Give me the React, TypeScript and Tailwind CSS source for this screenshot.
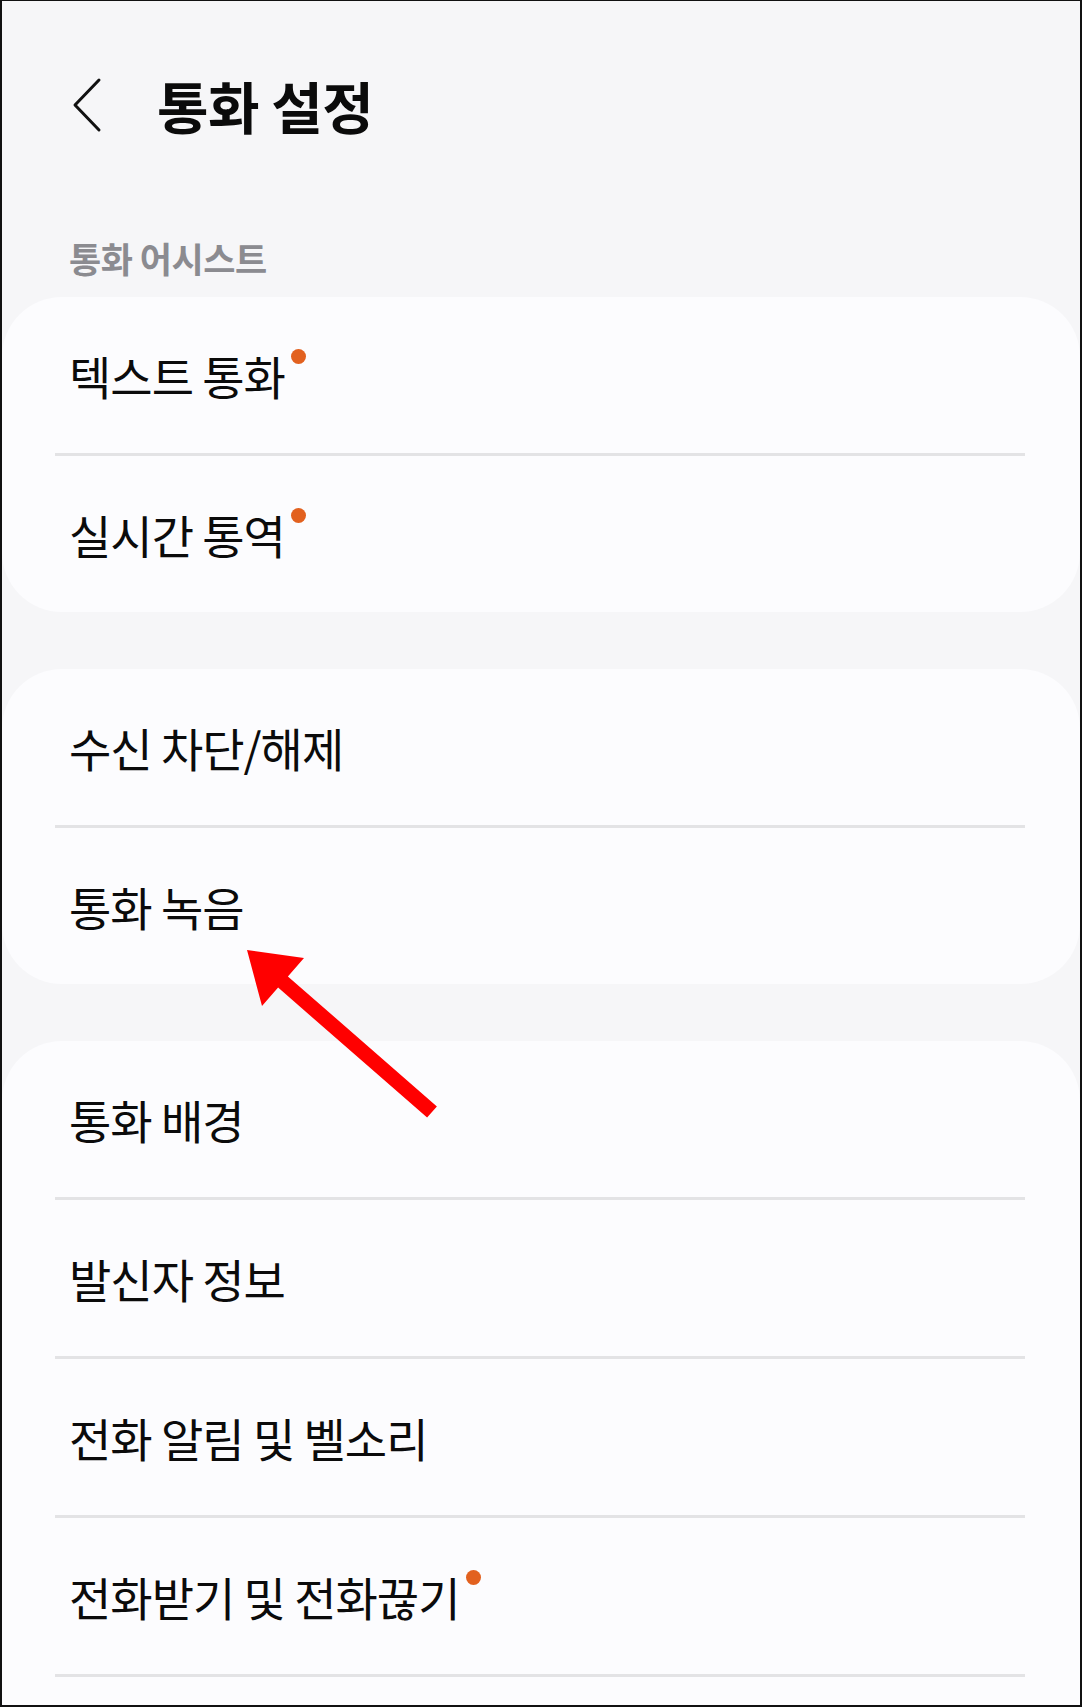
import React from 'react';

type Item = { label: string; dot?: boolean };

const groups: Item[][] = [
  [{ label: '텍스트 통화', dot: true }, { label: '실시간 통역', dot: true }],
  [{ label: '수신 차단/해제' }, { label: '통화 녹음' }],
  [
    { label: '통화 배경' },
    { label: '발신자 정보' },
    { label: '전화 알림 및 벨소리' },
    { label: '전화받기 및 전화끊기', dot: true },
  ],
];

function Row({ item }: { item: Item }) {
  return (
    <div className="flex h-[156px] items-center pl-[67px]">
      <div className="flex items-start">
        <span className="text-[46px] leading-[50px] tracking-[-1px] text-[#0b0b0b]">{item.label}</span>
        {item.dot && <span className="-mt-[1px] ml-[6px] size-[15px] rounded-full bg-[#e2611f]" />}
      </div>
    </div>
  );
}

function Divider() {
  return <div className="ml-[53px] mr-[55px] h-[3px] bg-[#e3e3e5]" />;
}

export default function App() {
  return (
    <div className="relative h-[1707px] w-[1082px] overflow-hidden border-x-2 border-t border-b-2 border-[#111] bg-[#f6f6f8] font-['Noto_Sans_CJK_KR','Noto_Sans',sans-serif]">
      {/* Header */}
      <header className="flex h-[208px] items-center pl-[70px]">
        <svg width="30" height="56" viewBox="0 0 30 56" fill="none" className="shrink-0">
          <polyline
            points="27,3 3,28 27,53"
            stroke="#111"
            strokeWidth="3"
            strokeLinecap="round"
            strokeLinejoin="round"
          />
        </svg>
        <h1 className="ml-[55px] text-[56px] font-bold leading-[60px] tracking-[-0.5px] text-[#0b0b0b]">통화 설정</h1>
      </header>

      <div className="mt-[29px] mb-[19px] pl-[67px] text-[35px] font-bold leading-[40px] tracking-[-0.5px] text-[#8b8b90]">
        통화 어시스트
      </div>

      {/* Cards */}
      <div className="flex flex-col gap-[57px]">
        {groups.map((group, gi) => (
          <div key={gi} className={`rounded-[60px] bg-[#fcfcfe] ${gi === groups.length - 1 ? 'pb-[120px]' : ''}`}>
            {group.map((item, i) => (
              <div key={item.label}>
                <Row item={item} />
                {(i < group.length - 1 || gi === groups.length - 1) && <Divider />}
              </div>
            ))}
          </div>
        ))}
      </div>

      {/* red annotation arrow */}
      <svg
        className="pointer-events-none absolute left-[238px] top-[944px]"
        width="205"
        height="180"
        viewBox="240 945 205 180"
      >
        <polygon
          points="247,950 304,958 287.9,976.4 436.9,1106.4 427.1,1117.6 278.1,987.6 262,1006"
          fill="#ff0000"
        />
      </svg>
    </div>
  );
}
